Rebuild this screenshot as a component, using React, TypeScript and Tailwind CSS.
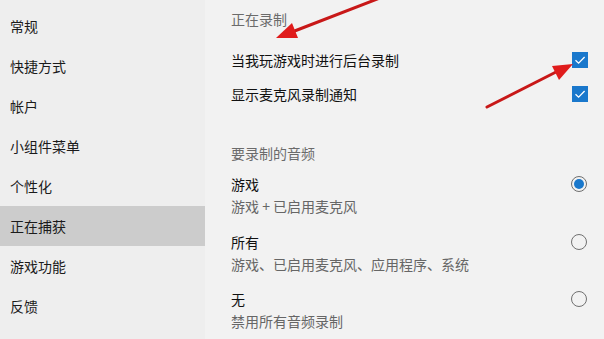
const FONT = { fontFamily: '"Noto Sans CJK SC", "Noto Sans", sans-serif' };

const navItems = ["常规", "快捷方式", "帐户", "小组件菜单", "个性化", "正在捕获", "游戏功能", "反馈"];

function Checkbox() {
  return (
    <div className="w-4 h-4 bg-[#1a78cc] flex items-center justify-center">
      <svg width="12" height="12" viewBox="0 0 12 12" fill="none">
        <path d="M1.5 6.2 L4.6 9.2 L10.6 3" stroke="#fff" strokeWidth="1.3" />
      </svg>
    </div>
  );
}

function Radio({ checked }: { checked?: boolean }) {
  return (
    <div
      className={`w-4 h-4 rounded-full border ${checked ? "border-[#6f6f6f]" : "border-[#707070]"} flex items-center justify-center`}
    >
      {checked && <div className="w-[10px] h-[10px] rounded-full bg-[#1a78cc]" />}
    </div>
  );
}

function RadioRow({ title, sub, checked, className = "" }: { title: string; sub: string; checked?: boolean; className?: string }) {
  return (
    <div className={`flex items-start justify-between pr-[17px] ${className}`}>
      <div>
        <p className="h-5 leading-5 text-[14px] text-[#111]">{title}</p>
        <p className="h-5 leading-5 text-[14px] text-[#666] mt-[2px]">{sub}</p>
      </div>
      <div className="mt-[2px]">
        <Radio checked={checked} />
      </div>
    </div>
  );
}

export default function App() {
  return (
    <div className="relative w-[604px] h-[339px] overflow-hidden flex bg-[#f2f2f2]" style={FONT}>
      {/* Sidebar */}
      <div className="w-[205px] h-full bg-[#eeeeee] pt-[6px]">
        {navItems.map((item) => (
          <div
            key={item}
            className={`h-10 flex items-center pl-[10px] text-[14px] text-[#1b1b1b] ${item === "正在捕获" ? "bg-[#cccccc]" : ""}`}
          >
            {item}
          </div>
        ))}
      </div>

      {/* Main */}
      <div className="flex-1 pl-[26px] pt-[9px]">
        <p className="h-5 leading-5 text-[14px] text-[#6b6b6b]">正在录制</p>

        <div className="mt-[21px] h-5 flex items-center justify-between pr-4">
          <span className="text-[14px] text-[#111]">当我玩游戏时进行后台录制</span>
          <Checkbox />
        </div>
        <div className="mt-[14px] h-5 flex items-center justify-between pr-4">
          <span className="text-[14px] text-[#111]">显示麦克风录制通知</span>
          <Checkbox />
        </div>

        <p className="mt-[39px] h-5 leading-5 text-[14px] text-[#6b6b6b]">要录制的音频</p>

        <RadioRow className="mt-[11px]" title="游戏" sub="游戏 + 已启用麦克风" checked />
        <RadioRow className="mt-[16px]" title="所有" sub="游戏、已启用麦克风、应用程序、系统" />
        <RadioRow className="mt-[15px]" title="无" sub="禁用所有音频录制" />
      </div>

      {/* Annotation arrows */}
      <svg className="absolute inset-0 pointer-events-none" width="604" height="339" viewBox="0 0 604 339">
        <line x1="385" y1="-4" x2="292" y2="32" stroke="#c81818" strokeWidth="3" strokeLinecap="round" />
        <polygon points="276,38 298,38 292,23" fill="#e01c1c" />
        <line x1="487" y1="107" x2="558" y2="71" stroke="#c81818" strokeWidth="3" strokeLinecap="round" />
        <polygon points="573,64 559,80 552,66" fill="#e01c1c" />
      </svg>
    </div>
  );
}
